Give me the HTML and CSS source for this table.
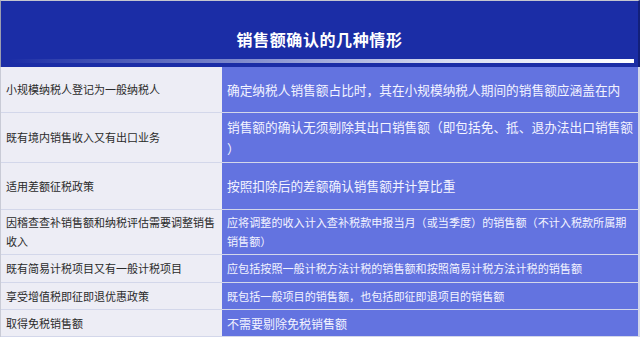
FILE: index.html
```html
<!DOCTYPE html>
<html lang="zh">
<head>
<meta charset="utf-8">
<link rel="stylesheet" href="styles.css">
</head>
<body>
<div class="page">
  <div class="header">
    <div class="title">销售额确认的几种情形</div>
    <div class="bar"></div>
  </div>
  <div class="table">
    <div class="cell left">小规模纳税人登记为一般纳税人</div>
    <div class="cell right big">确定纳税人销售额占比时，其在小规模纳税人期间的销售额应涵盖在内</div>
    <div class="cell left">既有境内销售收入又有出口业务</div>
    <div class="cell right big anywhere">销售额的确认无须剔除其出口销售额（即包括免、抵、退办法出口销售额）</div>
    <div class="cell left">适用差额征税政策</div>
    <div class="cell right big">按照扣除后的差额确认销售额并计算比重</div>
    <div class="cell left">因稽查查补销售额和纳税评估需要调整销售收入</div>
    <div class="cell right small">应将调整的收入计入查补税款申报当月（或当季度）的销售额（不计入税款所属期销售额）</div>
    <div class="cell left">既有简易计税项目又有一般计税项目</div>
    <div class="cell right small">应包括按照一般计税方法计税的销售额和按照简易计税方法计税的销售额</div>
    <div class="cell left">享受增值税即征即退优惠政策</div>
    <div class="cell right small">既包括一般项目的销售额，也包括即征即退项目的销售额</div>
    <div class="cell left">取得免税销售额</div>
    <div class="cell right mid">不需要剔除免税销售额</div>
  </div>
</div>
</body>
</html>
```

FILE: styles.css
```css
html, body {
  margin: 0;
  padding: 0;
  background: #ffffff;
}
.page {
  width: 640px;
  height: 337px;
  display: flex;
  flex-direction: column;
  font-family: "Noto Sans CJK SC", "Noto Sans", sans-serif;
  overflow: hidden;
}
.header {
  height: 67px;
  box-sizing: border-box;
  background: #1b2da6;
  border-top: 1px solid #c4c6cf;
  border-left: 1px solid #9a9db0;
  border-right: 2px solid #13207a;
  display: flex;
  flex-direction: column;
}
.title {
  height: 58px;
  box-sizing: border-box;
  padding-top: 18px;
  display: flex;
  align-items: center;
  justify-content: center;
  color: #ffffff;
  font-size: 16px;
  font-weight: bold;
  letter-spacing: 0.6px;
}
.bar {
  height: 4px;
  margin: 0 4px 0 8px;
  background: linear-gradient(to right, rgba(255,255,255,0) 0%, rgba(200,206,232,0.55) 35%, rgba(235,238,248,0.9) 70%, #ffffff 100%);
}
.table {
  flex: 1;
  display: grid;
  grid-template-columns: 221px 1fr;
  grid-template-rows: 45px 49px 46px 44px 27px 26px 26px;
  row-gap: 1px;
  padding-bottom: 1px;
  padding-right: 2px;
  border-left: 1px solid #c9cbd6;
  background: #d3d7ea;
}
.cell {
  display: flex;
  align-items: center;
  box-sizing: border-box;
}
.left {
  background: #ededf5;
  color: #2a2a2a;
  font-size: 11px;
  line-height: 19px;
  padding: 0 4px 0 5px;
}
.right {
  background: #6373e0;
  color: #f3f4ff;
  padding: 0 3px 0 5px;
}
.big {
  font-size: 12.7px;
  line-height: 22px;
}
.small {
  font-size: 11.1px;
  line-height: 19px;
}
.mid {
  font-size: 12px;
  line-height: 19px;
}
.anywhere {
  line-break: anywhere;
}
```
